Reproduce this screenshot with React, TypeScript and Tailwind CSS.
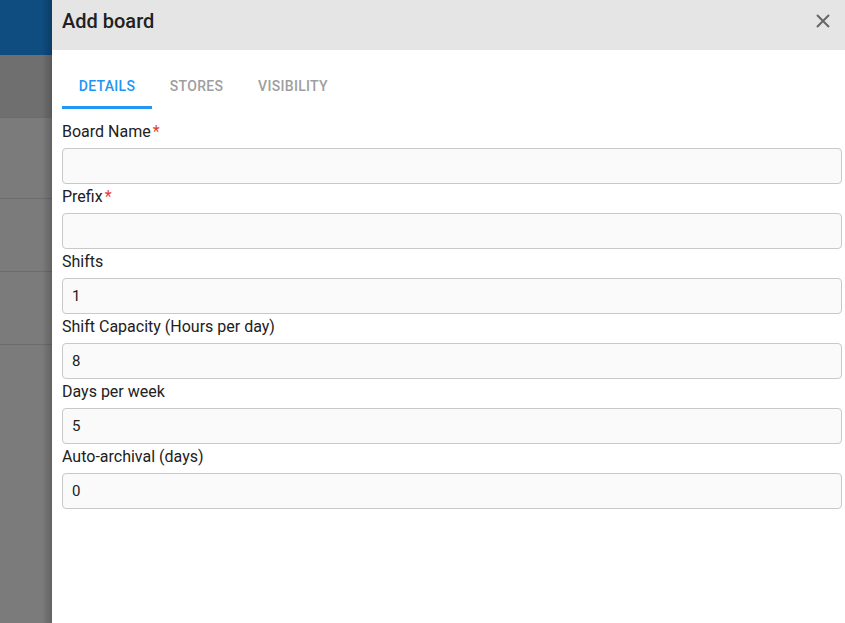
import React from "react";

const fields: { label: string; required?: boolean; value: string }[] = [
  { label: "Board Name", required: true, value: "" },
  { label: "Prefix", required: true, value: "" },
  { label: "Shifts", value: "1" },
  { label: "Shift Capacity (Hours per day)", value: "8" },
  { label: "Days per week", value: "5" },
  { label: "Auto-archival (days)", value: "0" },
];

export default function App() {
  return (
    <div
      className="flex h-[623px] w-[845px] overflow-hidden bg-white"
      style={{ fontFamily: "Roboto, 'Liberation Sans', sans-serif" }}
    >
      <div className="relative flex w-[52px] shrink-0 flex-col bg-[#7b7b7b]">
        <div className="h-[55px] bg-[#0f4c80]" />
        <div className="h-[63px] border-b border-[#6c6c6c] bg-[#6f6f6f]" />
        <div className="h-[81px] border-b border-[#6c6c6c]" />
        <div className="h-[73px] border-b border-[#6c6c6c]" />
        <div className="h-[73px] border-b border-[#6c6c6c]" />
        <div className="pointer-events-none absolute inset-y-0 right-0 w-[10px] bg-gradient-to-r from-transparent to-black/20" />
      </div>
      <div className="flex min-w-0 flex-1 flex-col">
        <div className="flex h-[50px] items-start justify-between bg-[#e5e5e5] pl-[10px] pr-[14px] pt-[7px]">
          <h1 className="text-[20px] leading-[28px] font-medium text-[#212121]">Add board</h1>
          <svg width="16" height="16" viewBox="0 0 16 16" className="mt-[6px] text-[#666]">
            <path d="M2 2 L14 14 M14 2 L2 14" stroke="currentColor" strokeWidth="2" />
          </svg>
        </div>
        <div className="flex h-[59px] px-[10px] text-[14px] font-medium tracking-[0.3px]">
          <div className="flex h-full w-[90px] items-start justify-center border-b-[3px] border-[#2196f3] pt-[26px] text-[#2196f3]">
            DETAILS
          </div>
          <div className="flex h-full w-[89px] items-start justify-center pt-[26px] text-[#9e9e9e]">
            STORES
          </div>
          <div className="flex h-full w-[104px] items-start justify-center pt-[26px] text-[#9e9e9e]">
            VISIBILITY
          </div>
        </div>
        <div className="mt-[10px] flex flex-col pl-[10px] pr-[3px]">
          {fields.map((f) => (
            <div key={f.label} className="flex flex-col">
              <label className="h-[29px] pt-[3px] text-[16px] leading-[20px] text-[#212121]">
                {f.label}
                {f.required && <span className="ml-[2px] text-[#e53935]">*</span>}
              </label>
              <div className="flex h-[36px] items-center rounded-[4px] border border-[#c8c8c8] bg-[#fafafa] px-[9px] text-[15px] text-[#212121]">
                {f.value}
              </div>
            </div>
          ))}
        </div>
      </div>
    </div>
  );
}
